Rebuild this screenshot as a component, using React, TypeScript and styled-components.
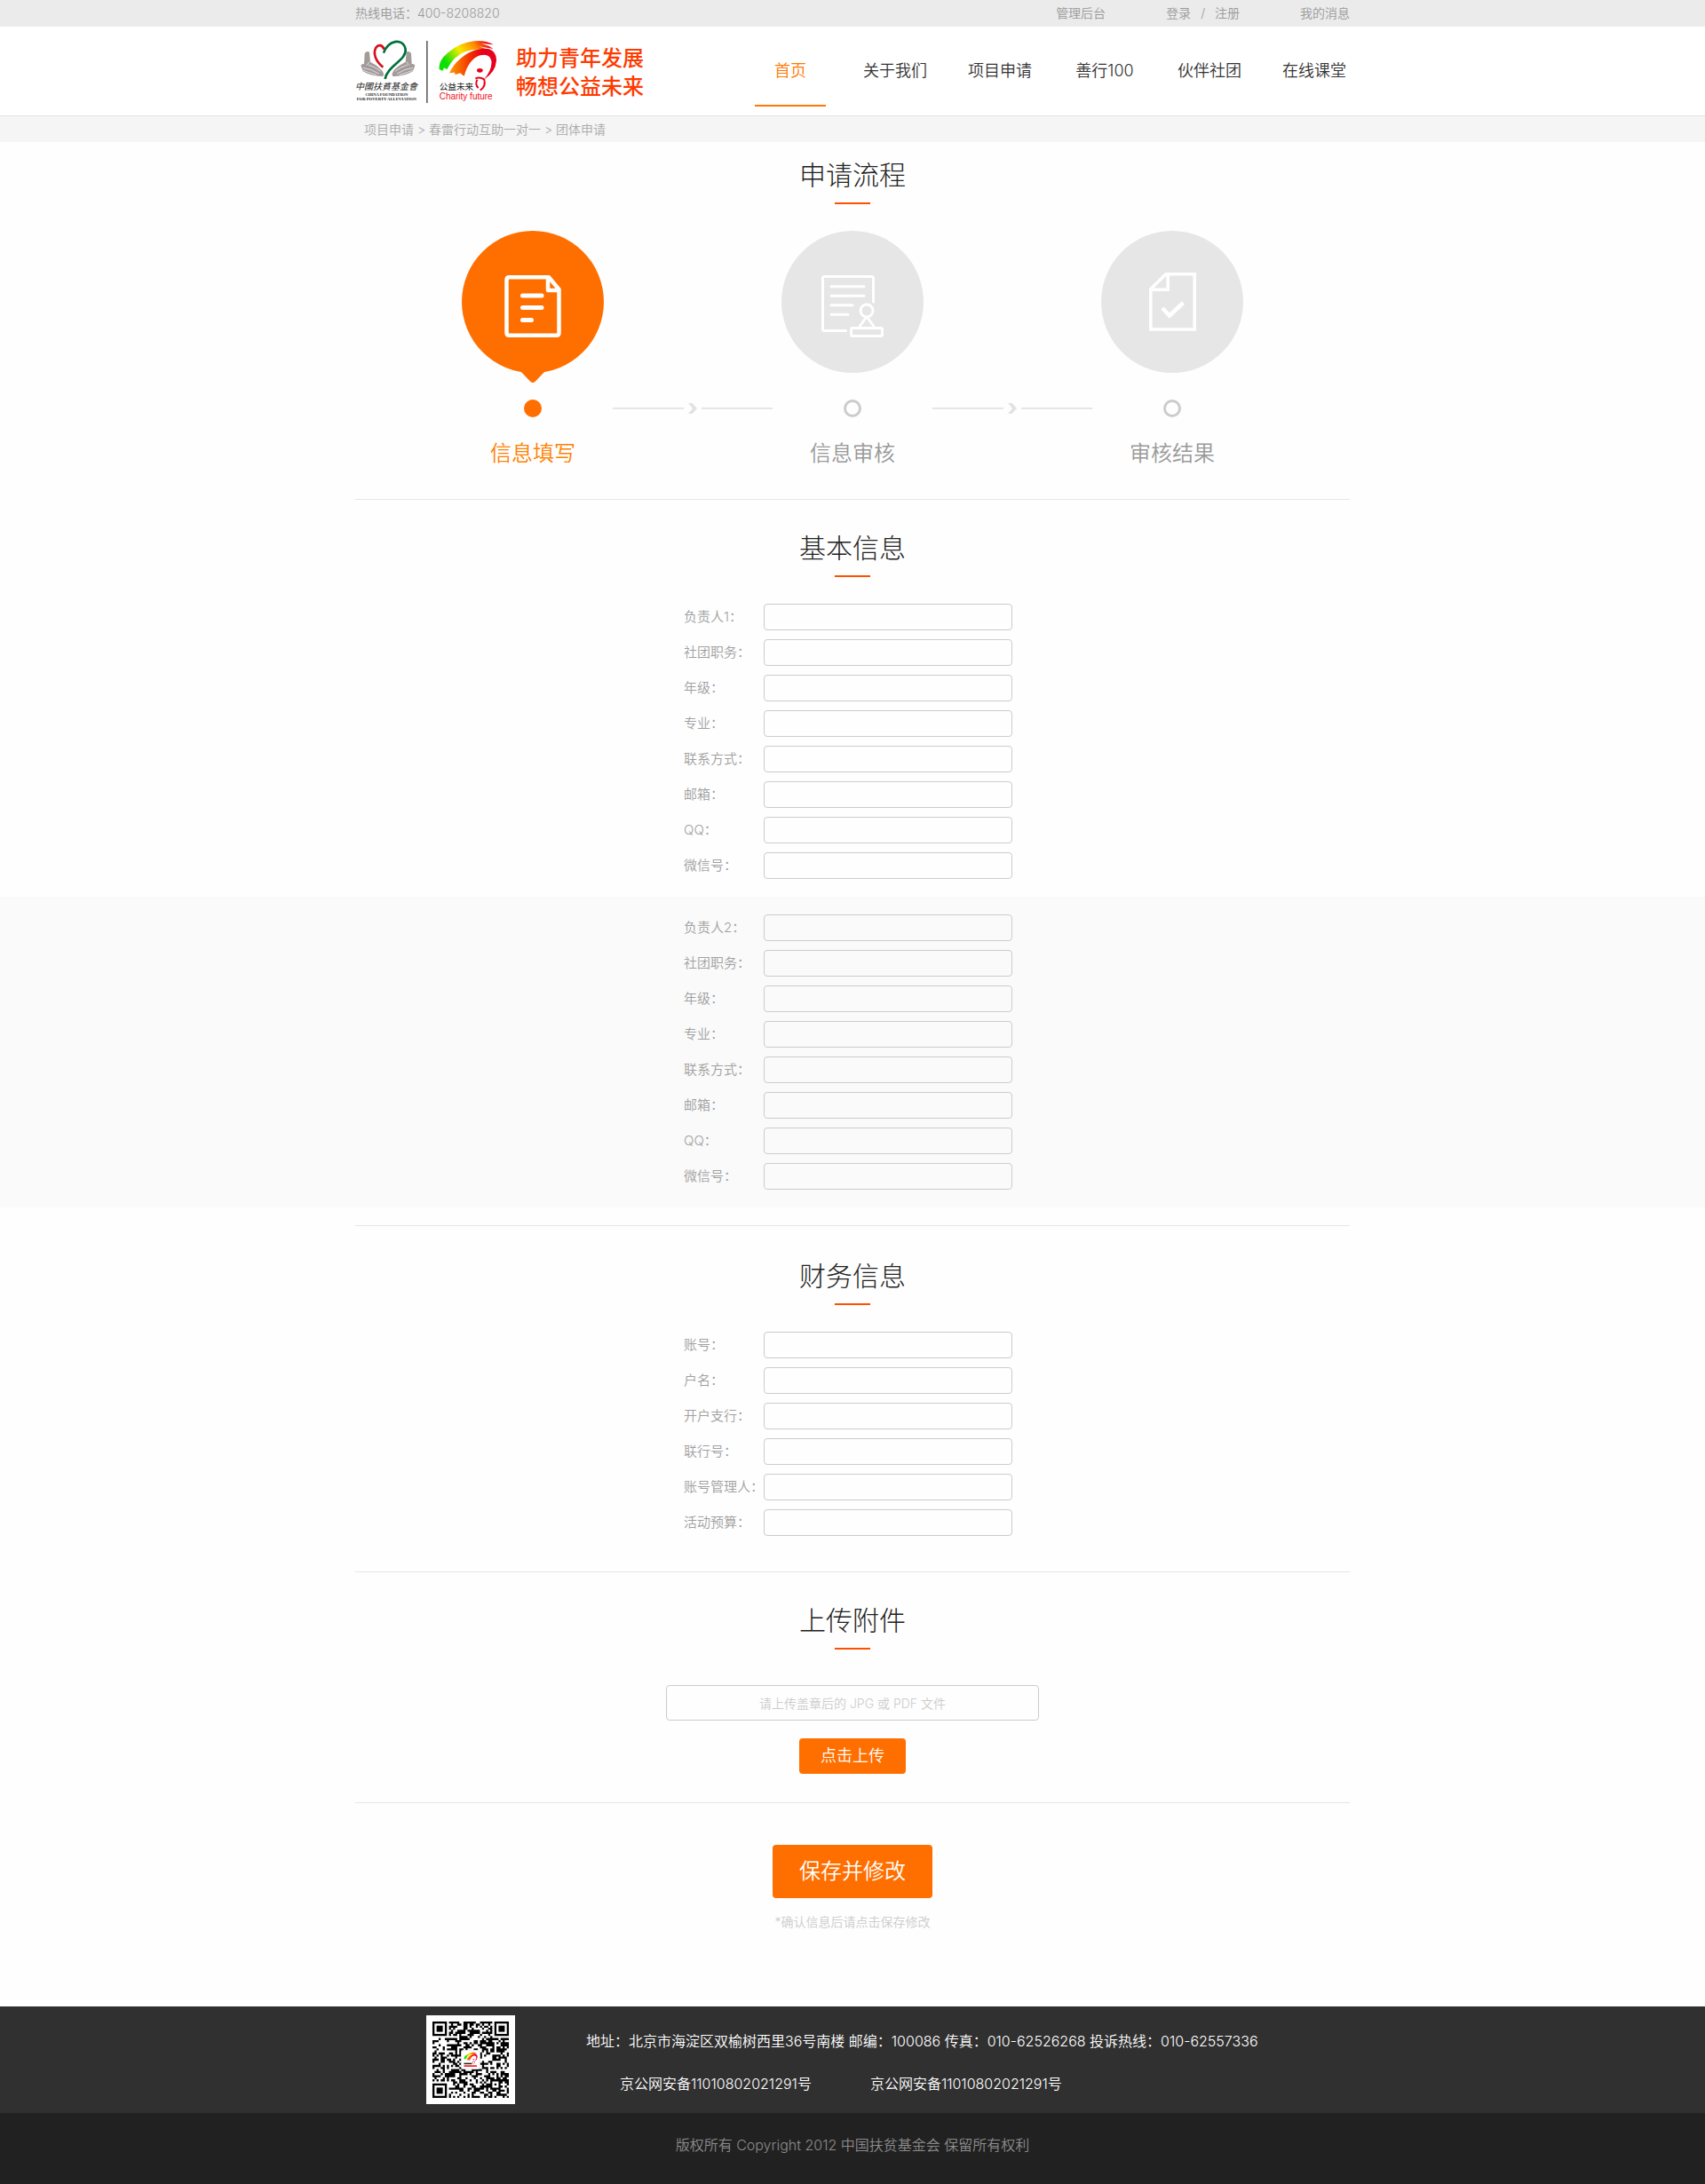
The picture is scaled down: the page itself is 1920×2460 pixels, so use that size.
import React from "react";
import styled, { createGlobalStyle } from "styled-components";

const ORANGE = "#ff6f00";

const GlobalStyle = createGlobalStyle`
  *, *::before, *::after { box-sizing: border-box; }
  body {
    margin: 0;
    background: #fefefe;
    color: #333;
    font-family: Inter, "Noto Sans CJK SC DemiLight", "Noto Sans CJK SC", sans-serif;
    font-size: 14px;
    font-weight: 300;
    line-height: 20px;
  }
  a { color: inherit; text-decoration: none; }
  input, button { font: inherit; }
  h2, p { margin: 0; font-weight: 300; }
`;

const Container = styled.div`
  width: 100%;
  max-width: 1120px;
  margin: 0 auto;
`;

const TopBar = styled.div`
  background: #ebebeb;
  color: #999;
`;

const TopRow = styled(Container)`
  display: flex;
  justify-content: space-between;
  align-items: center;
  height: 30px;
`;

const TopLinks = styled.nav`
  display: flex;
  gap: 68px;
`;

const AuthLinks = styled.span`
  display: flex;
  gap: 11px;
`;

const Header = styled.header`
  background: #fff;
  border-bottom: 1px solid #e4e4e4;
`;

const HeaderRow = styled(Container)`
  display: flex;
  justify-content: space-between;
  align-items: center;
  height: 100px;
`;

const Brand = styled.a`
  display: flex;
  align-items: center;
  gap: 15px;
`;

const Slogan = styled.span`
  color: #ff3a00;
  font-size: 24px;
  font-weight: 500;
  font-family: "Noto Sans CJK SC", sans-serif;
  line-height: 32px;
`;

const SloganLine = styled.span`
  display: block;
`;

const MainNav = styled.nav`
  display: flex;
  align-self: stretch;
  gap: 38px;
`;

const NavItem = styled.a<{ $active?: boolean }>`
  width: 80px;
  height: 100px;
  font-size: 18px;
  line-height: 100px;
  text-align: center;
  white-space: nowrap;
  color: ${(p) => (p.$active ? "#ff7800" : "#333")};
  background: ${(p) =>
    p.$active ? "linear-gradient(#ff7800, #ff7800) 0 88px / 80px 2px no-repeat" : "none"};
`;

const CrumbBar = styled.div`
  background: #f5f5f5;
`;

const Crumbs = styled(Container)`
  padding: 5px 10px 4px;
  color: #aaa;
`;

const Section = styled.section<{ $top: number; $bottom: number }>`
  padding: ${(p) => p.$top}px 0 ${(p) => p.$bottom}px;
`;

const Divider = styled.hr`
  width: 100%;
  max-width: 1120px;
  height: 1px;
  margin: 0 auto;
  border: 0;
  background: #e6e6e6;
`;

const Heading = styled.h2`
  font-family: "Noto Sans CJK SC Light", "Noto Sans CJK SC", sans-serif;
  font-size: 30px;
  line-height: 44px;
  text-align: center;
  color: #222;

  &::after {
    content: "";
    display: block;
    width: 40px;
    height: 2px;
    margin: 11px auto 30px;
    background: #ff5000;
  }
`;

const Steps = styled.div`
  display: flex;
  justify-content: center;
  gap: 10px;
`;

const Step = styled.div<{ $active?: boolean }>`
  display: flex;
  flex-direction: column;
  align-items: center;
  width: 160px;
  color: ${(p) => (p.$active ? "#ff8000" : "#999")};
`;

const StepCircle = styled.div<{ $active?: boolean }>`
  width: 160px;
  height: 160px;
  border-radius: 50%;
  background: ${(p) => (p.$active ? ORANGE : "#e6e6e6")};
`;

const StepIcon = styled.svg`
  display: block;
  width: 160px;
  height: 160px;
  overflow: visible;
  fill: none;
  stroke: #fff;
`;

const StepDot = styled.span<{ $active?: boolean }>`
  width: 20px;
  height: 20px;
  margin: 30px 0 23px;
  border: 3px solid ${(p) => (p.$active ? ORANGE : "#ccc")};
  border-radius: 50%;
  background: ${(p) => (p.$active ? ORANGE : "transparent")};
`;

const StepLabel = styled.span`
  font-size: 24px;
  line-height: 36px;
`;

const Connector = styled.div`
  display: flex;
  align-items: center;
  justify-content: space-between;
  width: 180px;
  height: 20px;
  margin-top: 190px;

  &::before,
  &::after {
    content: "";
    width: 80px;
    height: 2px;
    background: #e6e6e6;
  }
`;

const PersonBand = styled.div<{ $shaded?: boolean }>`
  padding: ${(p) => (p.$shaded ? "20px 0" : "0 0 20px")};
  background: ${(p) => (p.$shaded ? "#fafafa" : "transparent")};
`;

const Fields = styled.div`
  display: grid;
  row-gap: 10px;
  width: 380px;
  margin: 0 auto;
`;

const Field = styled.label`
  display: grid;
  grid-template-columns: 90px 280px;
  align-items: center;
  color: #a0a0a0;
  font-size: 15px;
  white-space: nowrap;
`;

const TextInput = styled.input`
  width: 100%;
  height: 30px;
  padding: 0 10px;
  border: 1px solid #ccc;
  border-radius: 4px;
  background: transparent;
  color: #333;
`;

const Stack = styled.div`
  display: flex;
  flex-direction: column;
  align-items: center;
`;

const UploadInput = styled(TextInput)`
  width: 420px;
  height: 40px;
  margin: 10px 0 20px;
  text-align: center;

  &::placeholder {
    color: #ccc;
    opacity: 1;
  }
`;

const PrimaryButton = styled.button<{ $large?: boolean }>`
  width: ${(p) => (p.$large ? 180 : 120)}px;
  height: ${(p) => (p.$large ? 60 : 40)}px;
  padding: 0;
  border: 0;
  border-radius: 4px;
  background: ${ORANGE};
  color: #fff;
  font-size: ${(p) => (p.$large ? 24 : 18)}px;
  cursor: pointer;
`;

const Note = styled.p`
  margin-top: 17px;
  color: #ccc;
`;

const FooterInfo = styled.footer`
  background: #303030;
  color: #fff;
  font-size: 16px;
  line-height: 48px;
`;

const FooterRow = styled(Container)`
  display: flex;
  gap: 80px;
  height: 120px;
  padding: 10px 0 10px 80px;
`;

const FooterText = styled.div`
  padding-top: 5px;
`;

const Records = styled.p`
  display: flex;
  gap: 66px;
  padding-left: 38px;
`;

const Copyright = styled.div`
  padding-bottom: 8px;
  background: #212121;
  color: #8c8c8c;
  font-size: 16px;
  line-height: 72px;
  text-align: center;
`;

function Hand() {
  return (
    <g>
      <path
        d="M44 70 Q50 60 60 65 L63 98 Q84 108 100 124 Q112 138 106 147 Q68 148 38 130 L31 110 Q36 102 42 106 Z"
        fill="#a39a9a"
      />
      <path
        d="M60 98 L50 110 M38 118 Q66 122 92 138 M38 126 Q60 136 84 142 M56 108 Q78 114 98 130"
        stroke="#fff"
        strokeWidth="2"
        fill="none"
      />
    </g>
  );
}

function Rider() {
  return (
    <g>
      <path
        d="M296 124 Q292 96 322 70 Q362 34 414 28 Q450 24 480 40 L438 36 Q462 42 478 54 L430 46 Q446 50 458 58 Q392 46 348 86 Q330 106 322 124 L312 118 L308 128 Z"
        fill="url(#swoosh)"
      />
      <path
        d="M330 136 Q346 100 384 74 Q424 48 462 54 Q490 62 489 94 Q486 134 446 158 Q476 124 472 94 Q466 68 434 76 Q396 88 380 146 L366 136 L350 142 L348 134 Z"
        fill="url(#arch)"
      />
      <ellipse cx="433" cy="127" rx="10" ry="7" fill="#e8001c" />
      <path
        d="M418 154 Q434 148 448 158 Q454 182 434 194 M424 158 Q416 176 428 186"
        fill="none"
        stroke="#e8001c"
        strokeWidth="6"
      />
    </g>
  );
}

function SwooshDefs() {
  return (
    <defs>
      <linearGradient id="swoosh" x1="0" x2="1" y1="0.4" y2="0">
        <stop offset="0" stopColor="#0be000" />
        <stop offset="0.35" stopColor="#f4ea00" />
        <stop offset="0.65" stopColor="#ff8a00" />
        <stop offset="0.9" stopColor="#e8001c" />
      </linearGradient>
      <linearGradient id="arch" x1="0" x2="1" y1="0" y2="0">
        <stop offset="0" stopColor="#ff9c00" />
        <stop offset="0.45" stopColor="#f03000" />
        <stop offset="0.7" stopColor="#e8001c" />
      </linearGradient>
    </defs>
  );
}

function Logos() {
  return (
    <svg width="166" height="86" viewBox="12 0 498 258" role="img" aria-label="中国扶贫基金会 公益未来">
      <SwooshDefs />
      <Hand />
      <g transform="translate(245 0) scale(-1 1)">
        <Hand />
      </g>
      <path d="M104 120 C84 104 68 74 80 50 C88 36 104 38 112 58" fill="none" stroke="#fff" strokeWidth="13" />
      <path d="M106 116 C84 98 70 72 82 50 C90 38 104 40 110 56" fill="none" stroke="#d8101c" strokeWidth="8" />
      <path d="M108 68 C120 26 174 14 182 56 C186 92 120 112 113 156" fill="none" stroke="#00703a" strokeWidth="8" />
      <g fill="#222">
        <text x="12" y="192" fontSize="30" fontStyle="italic" fontWeight="400" fontFamily="Noto Sans CJK TC">
          中國扶貧基金會
        </text>
        <g fontFamily="Liberation Serif" fontWeight="700" fontSize="14" textAnchor="middle">
          <text x="118" y="212">CHINA FOUNDATION</text>
          <text x="118" y="227">FOR POVERTY ALLEVIATION</text>
        </g>
      </g>
      <rect x="252" y="27" width="5" height="210" fill="#666" />
      <Rider />
      <text x="296" y="193" fontSize="29" fontWeight="400" fill="#222" fontFamily="Noto Sans CJK SC">
        公益未来
      </text>
      <text x="296" y="225" fontSize="30" fontWeight="400" fill="#f01020" fontFamily="Liberation Sans">
        Charity future
      </text>
    </svg>
  );
}

const QR_SIZE = 37;

function inFinder(x: number, y: number) {
  return (x < 8 && y < 8) || (x > 28 && y < 8) || (x < 8 && y > 28);
}

function inCentre(x: number, y: number) {
  return x > 13 && x < 23 && y > 13 && y < 23;
}

function qrPath() {
  let seed = 2291;
  let d = "";
  for (let y = 0; y < QR_SIZE; y++) {
    for (let x = 0; x < QR_SIZE; x++) {
      seed = (seed * 1103515245 + 12345) % 2147483648;
      const align = Math.max(Math.abs(x - 30), Math.abs(y - 30));
      const dark = align <= 2 ? align !== 1 : seed / 2147483648 > 0.47;
      if (dark && !inFinder(x, y) && !inCentre(x, y)) d += `M${x} ${y}h1v1h-1z`;
    }
  }
  return d;
}

function QrCode() {
  return (
    <svg width="100" height="100" viewBox="-3 -3 43 43" role="img" aria-label="二维码">
      <rect x="-3" y="-3" width="43" height="43" fill="#fff" />
      <path d={qrPath()} fill="#000" />
      {[[0, 0], [30, 0], [0, 30]].map(([x, y]) => (
        <g key={`${x}-${y}`}>
          <rect x={x + 0.5} y={y + 0.5} width="6" height="6" fill="none" stroke="#000" />
          <rect x={x + 2} y={y + 2} width="3" height="3" />
        </g>
      ))}
      <rect x="14" y="14" width="9" height="9" rx="1" fill="#fff" stroke="#ddd" strokeWidth="0.3" />
      <g transform="translate(5.2 14) scale(0.034)">
        <Rider />
        <path d="M296 188 H410" stroke="#222" strokeWidth="20" />
        <path d="M296 222 H480" stroke="#f01020" strokeWidth="20" />
      </g>
    </svg>
  );
}

function Chevron() {
  return (
    <svg width="10" height="12" viewBox="0 0 10 12" aria-hidden="true">
      <path d="M0 0 H4.5 L10 6 L4.5 12 H0 L5 6 Z" fill="#e2e2e2" />
    </svg>
  );
}

const fillIcon = (
  <g strokeWidth="4.5" strokeLinejoin="round" strokeLinecap="round">
    <path d="M65 157 L77.5 170 Q80 172 82.5 170 L95 157 Z" fill={ORANGE} stroke="none" />
    <path d="M98 52.2 H53.5 Q50.5 52.2 50.5 55.2 V114.8 Q50.5 117.8 53.5 117.8 H106.5 Q109.5 117.8 109.5 114.8 V66 L98 52.2 Z" />
    <path d="M97 53 V67 H109" />
    <path d="M68.5 73 H90 M68.5 86.5 H90 M68.5 100.5 H78.5" strokeWidth="5" />
  </g>
);

const stampIcon = (
  <g strokeWidth="3" strokeLinejoin="round" strokeLinecap="round">
    <path d="M103.5 80 V53.5 Q103.5 51.5 101.5 51.5 H48.5 Q46.5 51.5 46.5 53.5 V110.5 Q46.5 112.5 48.5 112.5 H72.5" />
    <path d="M56 62.7 H93 M56 73.3 H93 M56 83.8 H80 M56 94.3 H75" />
    <circle cx="96" cy="90" r="7" />
    <path d="M95 98 L87.5 108.5 M97 98 L104.5 108.5" />
    <rect x="78.5" y="109.5" width="35" height="9" rx="1.5" />
  </g>
);

const resultIcon = (
  <g strokeWidth="3.5">
    <path d="M73 48.8 H105.2 V111 H55.8 V65.5 Z" />
    <path d="M75.2 49 V66.3 H56" />
    <path d="M69 87 L77 95.5 L92.5 81" strokeWidth="4.5" />
  </g>
);

const steps = [
  { label: "信息填写", icon: fillIcon, active: true },
  { label: "信息审核", icon: stampIcon, active: false },
  { label: "审核结果", icon: resultIcon, active: false },
];

const navItems = ["首页", "关于我们", "项目申请", "善行100", "伙伴社团", "在线课堂"];
const personFields = ["社团职务：", "年级：", "专业：", "联系方式：", "邮箱：", "QQ：", "微信号："];
const financeFields = ["账号：", "户名：", "开户支行：", "联行号：", "账号管理人：", "活动预算："];

function FieldList({ labels }: { labels: string[] }) {
  return (
    <Fields>
      {labels.map((label) => (
        <Field key={label}>
          <span>{label}</span>
          <TextInput type="text" />
        </Field>
      ))}
    </Fields>
  );
}

export default function App() {
  return (
    <>
      <GlobalStyle />
      <TopBar>
        <TopRow>
          <span>热线电话：400-8208820</span>
          <TopLinks>
            <a href="#admin">管理后台</a>
            <AuthLinks>
              <a href="#login">登录</a>
              <span>/</span>
              <a href="#register">注册</a>
            </AuthLinks>
            <a href="#messages">我的消息</a>
          </TopLinks>
        </TopRow>
      </TopBar>
      <Header>
        <HeaderRow>
          <Brand href="#home">
            <Logos />
            <Slogan>
              <SloganLine>助力青年发展</SloganLine>
              <SloganLine>畅想公益未来</SloganLine>
            </Slogan>
          </Brand>
          <MainNav>
            {navItems.map((item, i) => (
              <NavItem key={item} href={`#nav-${i}`} $active={i === 0}>
                {item}
              </NavItem>
            ))}
          </MainNav>
        </HeaderRow>
      </Header>
      <CrumbBar>
        <Crumbs>
          <a href="#apply">项目申请</a> &gt; <a href="#spring">春雷行动互助一对一</a> &gt; <span>团体申请</span>
        </Crumbs>
      </CrumbBar>

      <main>
        <Section $top={13} $bottom={33}>
          <Heading>申请流程</Heading>
          <Steps>
            {steps.map((step, i) => (
              <React.Fragment key={step.label}>
                {i > 0 && (
                  <Connector>
                    <Chevron />
                  </Connector>
                )}
                <Step $active={step.active}>
                  <StepCircle $active={step.active}>
                    <StepIcon viewBox="0 0 160 160" aria-hidden="true">
                      {step.icon}
                    </StepIcon>
                  </StepCircle>
                  <StepDot $active={step.active} />
                  <StepLabel>{step.label}</StepLabel>
                </Step>
              </React.Fragment>
            ))}
          </Steps>
        </Section>
        <Divider />

        <Section $top={30} $bottom={20}>
          <Heading>基本信息</Heading>
          <PersonBand>
            <FieldList labels={["负责人1：", ...personFields]} />
          </PersonBand>
          <PersonBand $shaded>
            <FieldList labels={["负责人2：", ...personFields]} />
          </PersonBand>
        </Section>
        <Divider />

        <Section $top={32} $bottom={40}>
          <Heading>财务信息</Heading>
          <FieldList labels={financeFields} />
        </Section>
        <Divider />

        <Section $top={30} $bottom={32}>
          <Heading>上传附件</Heading>
          <Stack>
            <UploadInput type="text" placeholder="请上传盖章后的 JPG 或 PDF 文件" aria-label="上传附件" />
            <PrimaryButton type="button">点击上传</PrimaryButton>
          </Stack>
        </Section>
        <Divider />

        <Section $top={47} $bottom={85}>
          <Stack>
            <PrimaryButton type="submit" $large>
              保存并修改
            </PrimaryButton>
            <Note>*确认信息后请点击保存修改</Note>
          </Stack>
        </Section>
      </main>

      <FooterInfo>
        <FooterRow>
          <QrCode />
          <FooterText>
            <p>地址：北京市海淀区双榆树西里36号南楼 邮编：100086 传真：010-62526268 投诉热线：010-62557336</p>
            <Records>
              <span>京公网安备11010802021291号</span>
              <span>京公网安备11010802021291号</span>
            </Records>
          </FooterText>
        </FooterRow>
      </FooterInfo>
      <Copyright>版权所有 Copyright 2012 中国扶贫基金会 保留所有权利</Copyright>
    </>
  );
}
